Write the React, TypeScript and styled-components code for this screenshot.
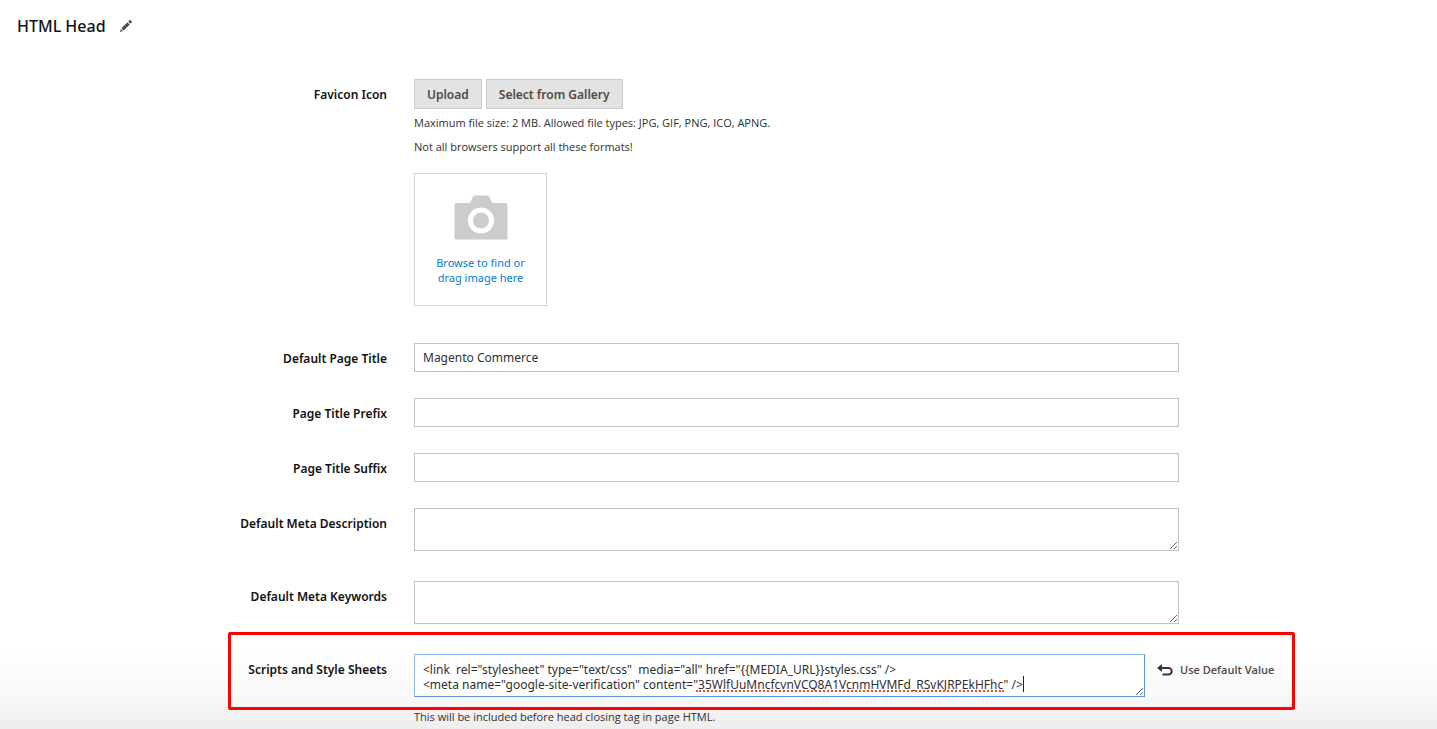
import React from "react";
import styled, { createGlobalStyle } from "styled-components";

const GlobalStyle = createGlobalStyle`
  * { box-sizing: border-box; }
  body {
    margin: 0;
    background: #fff;
    color: #303030;
    font-family: "Noto Sans", "Open Sans", sans-serif;
    font-size: 12px;
    line-height: 15px;
  }
  button, input, textarea { font: inherit; color: inherit; }
`;

const Page = styled.main`
  min-height: 100vh;
  overflow: hidden;
  background: linear-gradient(to top, #ececec 0, #f8f8f8 36px, #fff 84px);
`;

const Header = styled.header`
  display: flex;
  align-items: center;
  gap: 14px;
  height: 52px;
  padding: 0 17px;
`;

const Title = styled.h1`
  margin: 0;
  color: #111;
  font-size: 16px;
  line-height: 20px;
  font-weight: 500;
`;

const IconButton = styled.button`
  display: flex;
  padding: 0;
  border: 0;
  background: none;
  color: #514943;
  cursor: pointer;
`;

const Form = styled.form`
  display: flex;
  flex-direction: column;
  gap: 26px;
  padding-top: 27px;
`;

const Row = styled.div<{ $action?: boolean; $tall?: boolean }>`
  position: relative;
  display: grid;
  grid-template-columns: ${(p) => (p.$action ? "414fr 731fr 292fr" : "414fr 765fr 258fr")};
  align-items: start;
  padding-bottom: ${(p) => (p.$tall ? "4px" : "0")};
`;

const Label = styled.label`
  padding: 8px 27px 0 0;
  color: #111;
  font-weight: 600;
  text-align: right;
`;

const Field = styled.div`
  position: relative;
  min-width: 0;
`;

const Buttons = styled.div`
  display: flex;
  gap: 4px;
  margin-bottom: 6px;
`;

const Button = styled.button`
  height: 30px;
  padding: 0 12px;
  border: 1px solid #ccc;
  background: #e3e3e3;
  color: #514943;
  font-weight: 600;
  cursor: pointer;
`;

const Note = styled.p`
  margin: 0 0 8px;
  font-family: "Open Sans", sans-serif;
  font-size: 11px;
  line-height: 16px;
`;

const DropZone = styled.button`
  display: flex;
  flex-direction: column;
  align-items: center;
  width: 133px;
  height: 133px;
  margin: 18px 0 11px;
  padding: 21px 12px 0;
  border: 1px solid #d6d6d6;
  background: #fff;
  color: #007bdb;
  font-size: 11px;
  cursor: pointer;

  svg { margin-bottom: 15px; }
  span { max-width: 100px; }
`;

const TextInput = styled.input`
  display: block;
  width: 100%;
  height: 29px;
  padding: 0 8px 1px;
  border: 1px solid #c2c2c2;
  border-radius: 0;
  background: #fff;
  outline: none;
`;

const TextArea = styled.textarea<{ $focused?: boolean }>`
  display: block;
  width: 100%;
  height: 43px;
  padding: 7px 8px 4px;
  overflow: hidden;
  border: 1px solid;
  border-color: ${(p) => (p.$focused ? "#8fc0f0 #5b93dc #5b93dc #8fc0f0" : "#c2c2c2")};
  border-radius: 0;
  background: #fff;
  outline: none;
  resize: both;
`;

const ScriptsEditor = styled.div`
  position: relative;
  margin-bottom: 12px;
`;

const SpellingMark = styled.span`
  position: absolute;
  top: 36px;
  left: 282px;
  width: 308px;
  border-bottom: 2px dotted #f0493e;
  pointer-events: none;
`;

const Caret = styled.span`
  position: absolute;
  top: 22px;
  left: 609px;
  width: 1px;
  height: 16px;
  background: #222;
  pointer-events: none;
`;

const ResetButton = styled.button`
  display: flex;
  align-items: center;
  gap: 7px;
  margin: 8px 0 0 12px;
  padding: 0;
  border: 0;
  background: none;
  color: #514943;
  font-family: "Open Sans", sans-serif;
  font-size: 11px;
  font-weight: 600;
  cursor: pointer;
`;

const Highlight = styled.div`
  position: absolute;
  top: -22px;
  left: 228px;
  right: 142px;
  height: 78px;
  border: 3px solid #f00;
  border-radius: 2px;
  pointer-events: none;
`;

const PencilIcon = () => (
  <svg width="12" height="12" viewBox="0 0 12 12" fill="currentColor" aria-hidden="true">
    <path d="M0 12l.9-3 2.1 2.1zM1.5 8.3l6-6 2.2 2.2-6 6zM8.2 1.6l1.2-1.2c.4-.4.9-.4 1.3 0l.9.9c.4.4.4.9 0 1.3l-1.2 1.2z" />
  </svg>
);

const CameraIcon = () => (
  <svg width="54" height="45" viewBox="0 0 54 45" aria-hidden="true">
    <path
      fill="#ccc"
      d="M2 8H16l3-6.200Q20 .5 21.500 .5H33Q34.500 .5 35.200 1.800L38.500 8H52Q53.500 8 53.500 9.500V43Q53.500 44.500 52 44.500H2Q.5 44.500 .5 43V9.500Q.5 8 2 8z"
    />
    <circle cx="27" cy="25.500" r="10.500" fill="none" stroke="#fff" strokeWidth="5" />
  </svg>
);

const UndoIcon = () => (
  <svg width="16" height="12" viewBox="0 0 16 12" aria-hidden="true">
    <path d="M0 4L5 0v8z" fill="#41362f" />
    <path d="M4 4h7.500a3.200 3.200 0 0 1 0 6.500H5.500" fill="none" stroke="#41362f" strokeWidth="2" />
  </svg>
);

const textFields = [
  { id: "page-title", label: "Default Page Title", value: "Magento Commerce" },
  { id: "title-prefix", label: "Page Title Prefix", value: "" },
  { id: "title-suffix", label: "Page Title Suffix", value: "" },
];

const areaFields = [
  { id: "meta-description", label: "Default Meta Description" },
  { id: "meta-keywords", label: "Default Meta Keywords" },
];

const scripts = `<link  rel="stylesheet" type="text/css"  media="all" href="{{MEDIA_URL}}styles.css" />
<meta name="google-site-verification" content="35WlfUuMncfcvnVCQ8A1VcnmHVMFd_RSvKJRPEkHFhc" />`;

export default function App() {
  return (
    <Page>
      <GlobalStyle />
      <Header>
        <Title>HTML Head</Title>
        <IconButton type="button" aria-label="Edit">
          <PencilIcon />
        </IconButton>
      </Header>
      <Form>
        <Row>
          <Label htmlFor="favicon">Favicon Icon</Label>
          <Field>
            <Buttons>
              <Button id="favicon" type="button">Upload</Button>
              <Button type="button">Select from Gallery</Button>
            </Buttons>
            <Note>Maximum file size: 2 MB. Allowed file types: JPG, GIF, PNG, ICO, APNG.</Note>
            <Note>Not all browsers support all these formats!</Note>
            <DropZone type="button">
              <CameraIcon />
              <span>Browse to find or drag image here</span>
            </DropZone>
          </Field>
        </Row>
        {textFields.map((f) => (
          <Row key={f.id}>
            <Label htmlFor={f.id}>{f.label}</Label>
            <Field>
              <TextInput id={f.id} type="text" defaultValue={f.value} />
            </Field>
          </Row>
        ))}
        {areaFields.map((f) => (
          <Row key={f.id} $tall>
            <Label htmlFor={f.id}>{f.label}</Label>
            <Field>
              <TextArea id={f.id} />
            </Field>
          </Row>
        ))}
        <Row $action>
          <Label htmlFor="scripts">Scripts and Style Sheets</Label>
          <Field>
            <ScriptsEditor>
              <TextArea id="scripts" $focused spellCheck={false} defaultValue={scripts} />
              <SpellingMark />
              <Caret />
            </ScriptsEditor>
            <Note>This will be included before head closing tag in page HTML.</Note>
          </Field>
          <ResetButton type="button">
            <UndoIcon />
            Use Default Value
          </ResetButton>
          <Highlight />
        </Row>
      </Form>
    </Page>
  );
}
